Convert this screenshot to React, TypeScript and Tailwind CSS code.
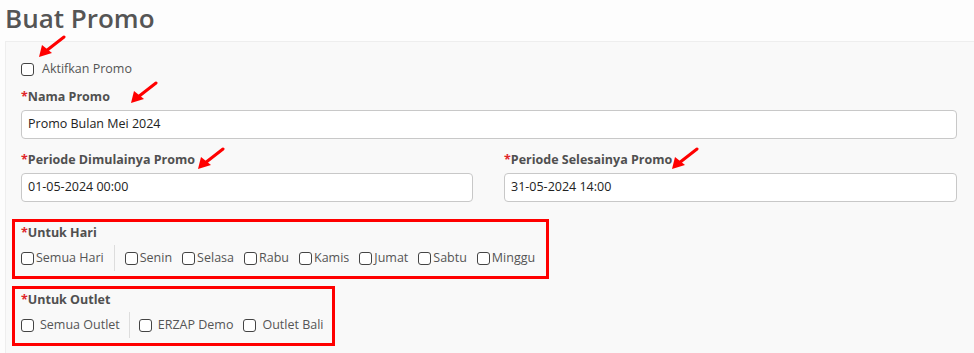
import { Fragment } from 'react';

const days = ['Senin', 'Selasa', 'Rabu', 'Kamis', 'Jumat', 'Sabtu', 'Minggu'];
const outlets = ['ERZAP Demo', 'Outlet Bali'];

function Box() {
  return <span className="inline-block w-[13px] h-[13px] shrink-0 rounded-[3px] border border-[#444] bg-white" />;
}

function Label({ text }: { text: string }) {
  return (
    <div className="text-[12.5px] font-bold text-[#505050] leading-[18px]">
      <span className="text-[#e0262b]">*</span>
      {text}
    </div>
  );
}

function Arrow({ className }: { className: string }) {
  return (
    <svg className={`absolute ${className}`} width="28" height="24" viewBox="0 0 28 24">
      <line x1="26" y1="2" x2="8" y2="16" stroke="#f00" strokeWidth="3" strokeLinecap="round" />
      <polygon points="1,22 4,10 14,18" fill="#f00" />
    </svg>
  );
}

export default function App() {
  return (
    <div className="relative w-[974px] h-[353px] overflow-hidden bg-[#fdfdfd] font-['Open_Sans',sans-serif]">
      <h1 className="h-[41px] pl-[5px] text-[26px] font-semibold leading-[36px] text-[#555]">Buat Promo</h1>

      <div className="ml-[5px] h-[312px] border-t border-l border-[#eee] bg-[#f9f9f9] pl-[15px] pr-[16px] pt-[20px]">
        <label className="flex items-center gap-[8px] text-[12.5px] text-[#555] leading-[14px]">
          <Box />
          Aktifkan Promo
        </label>

        <div className="mt-[12px]">
          <Label text="Nama Promo" />
          <div className="mt-[4px] flex h-[29px] w-[936px] items-center rounded-[4px] border border-[#c8c8c8] bg-white px-[6px] text-[12.5px] text-[#222]">
            Promo Bulan Mei 2024
          </div>
        </div>

        <div className="mt-[12px] grid grid-cols-[452px_453px] gap-x-[31px]">
          <div>
            <Label text="Periode Dimulainya Promo" />
            <div className="mt-[4px] flex h-[29px] items-center rounded-[4px] border border-[#c8c8c8] bg-white px-[6px] text-[12.5px] text-[#222]">
              01-05-2024 00:00
            </div>
          </div>
          <div>
            <Label text="Periode Selesainya Promo" />
            <div className="mt-[4px] flex h-[29px] items-center rounded-[4px] border border-[#c8c8c8] bg-white px-[6px] text-[12.5px] text-[#222]">
              31-05-2024 14:00
            </div>
          </div>
        </div>

        <div className="-ml-[9px] mt-[17px] w-[537px] border-[3px] border-[#f00] pl-[6px] pt-[2px] pb-[5px]">
          <Label text="Untuk Hari" />
          <div className="mt-[3px] flex items-center text-[12.5px] text-[#555] leading-[26px]">
            <span className="flex items-center gap-[2px]">
              <Box />
              Semua Hari
            </span>
            <span className="mx-[10px] h-[26px] w-px bg-[#ddd]" />
            <div className="flex items-center gap-[10px]">
              {days.map((d) => (
                <span key={d} className="flex items-center gap-[2px]">
                  <Box />
                  {d}
                </span>
              ))}
            </div>
          </div>
        </div>

        <div className="-ml-[9px] mt-[7px] w-[323px] border-[3px] border-[#f00] pl-[6px] pt-[2px] pb-[5px]">
          <Label text="Untuk Outlet" />
          <div className="mt-[3px] flex items-center text-[12.5px] text-[#555] leading-[26px]">
            <span className="flex items-center gap-[6px]">
              <Box />
              Semua Outlet
            </span>
            <span className="mx-[9px] h-[26px] w-px bg-[#ddd]" />
            {outlets.map((o, i) => (
              <Fragment key={o}>
                <span className={`flex items-center gap-[6px] ${i > 0 ? 'ml-[10px]' : ''}`}>
                  <Box />
                  {o}
                </span>
              </Fragment>
            ))}
          </div>
        </div>
      </div>

      <Arrow className="left-[38px] top-[35px]" />
      <Arrow className="left-[130px] top-[81px]" />
      <Arrow className="left-[197px] top-[147px]" />
      <Arrow className="left-[671px] top-[147px]" />
    </div>
  );
}
